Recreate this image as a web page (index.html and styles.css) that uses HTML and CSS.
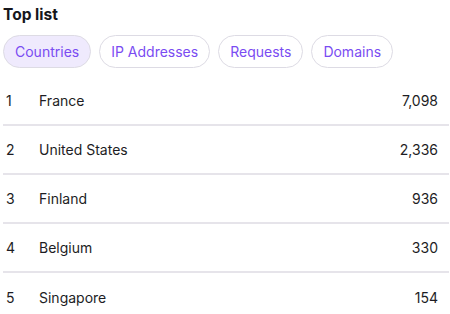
FILE: index.html
```html
<!DOCTYPE html>
<html>
<head>
<meta charset="utf-8">
<link rel="stylesheet" href="styles.css">
</head>
<body>
<div class="panel">
  <h2 class="title">Top list</h2>
  <div class="tabs">
    <button class="tab active">Countries</button>
    <button class="tab">IP Addresses</button>
    <button class="tab">Requests</button>
    <button class="tab">Domains</button>
  </div>
  <div class="list">
    <div class="row"><span class="rank">1</span><span class="name">France</span><span class="value">7,098</span></div>
    <div class="row"><span class="rank">2</span><span class="name">United States</span><span class="value">2,336</span></div>
    <div class="row"><span class="rank">3</span><span class="name">Finland</span><span class="value">936</span></div>
    <div class="row"><span class="rank">4</span><span class="name">Belgium</span><span class="value">330</span></div>
    <div class="row"><span class="rank">5</span><span class="name">Singapore</span><span class="value">154</span></div>
  </div>
</div>
</body>
</html>
```
FILE: styles.css
```css
* { box-sizing: border-box; }
html, body { margin: 0; padding: 0; background: #fff; }
body {
  font-family: Inter, "Noto Sans", sans-serif;
  color: #1d1d24;
}
.panel {
  padding: 4px 1px 0 3px;
}
.title {
  margin: 0;
  font-size: 15.5px;
  line-height: 21px;
  font-weight: 700;
  color: #16161c;
}
.tabs {
  display: flex;
  gap: 8px;
  margin-top: 10px;
}
.tab {
  font-family: inherit;
  font-size: 14px;
  line-height: 17px;
  padding: 7px 11px;
  border: 1px solid #dddbe4;
  border-radius: 999px;
  background: #fff;
  color: #7a4cf2;
}
.tab.active {
  background: #efeafd;
}
.list {
  margin-top: 9px;
}
.row {
  display: flex;
  align-items: center;
  height: 49px;
  font-size: 14px;
  border-bottom: 2px solid #e6e4ea;
}
.row:last-child { border-bottom: none; }
.rank {
  width: 36px;
  padding-left: 3px;
}
.name { flex: 1; }
.value {
  padding-right: 11px;
}
```
